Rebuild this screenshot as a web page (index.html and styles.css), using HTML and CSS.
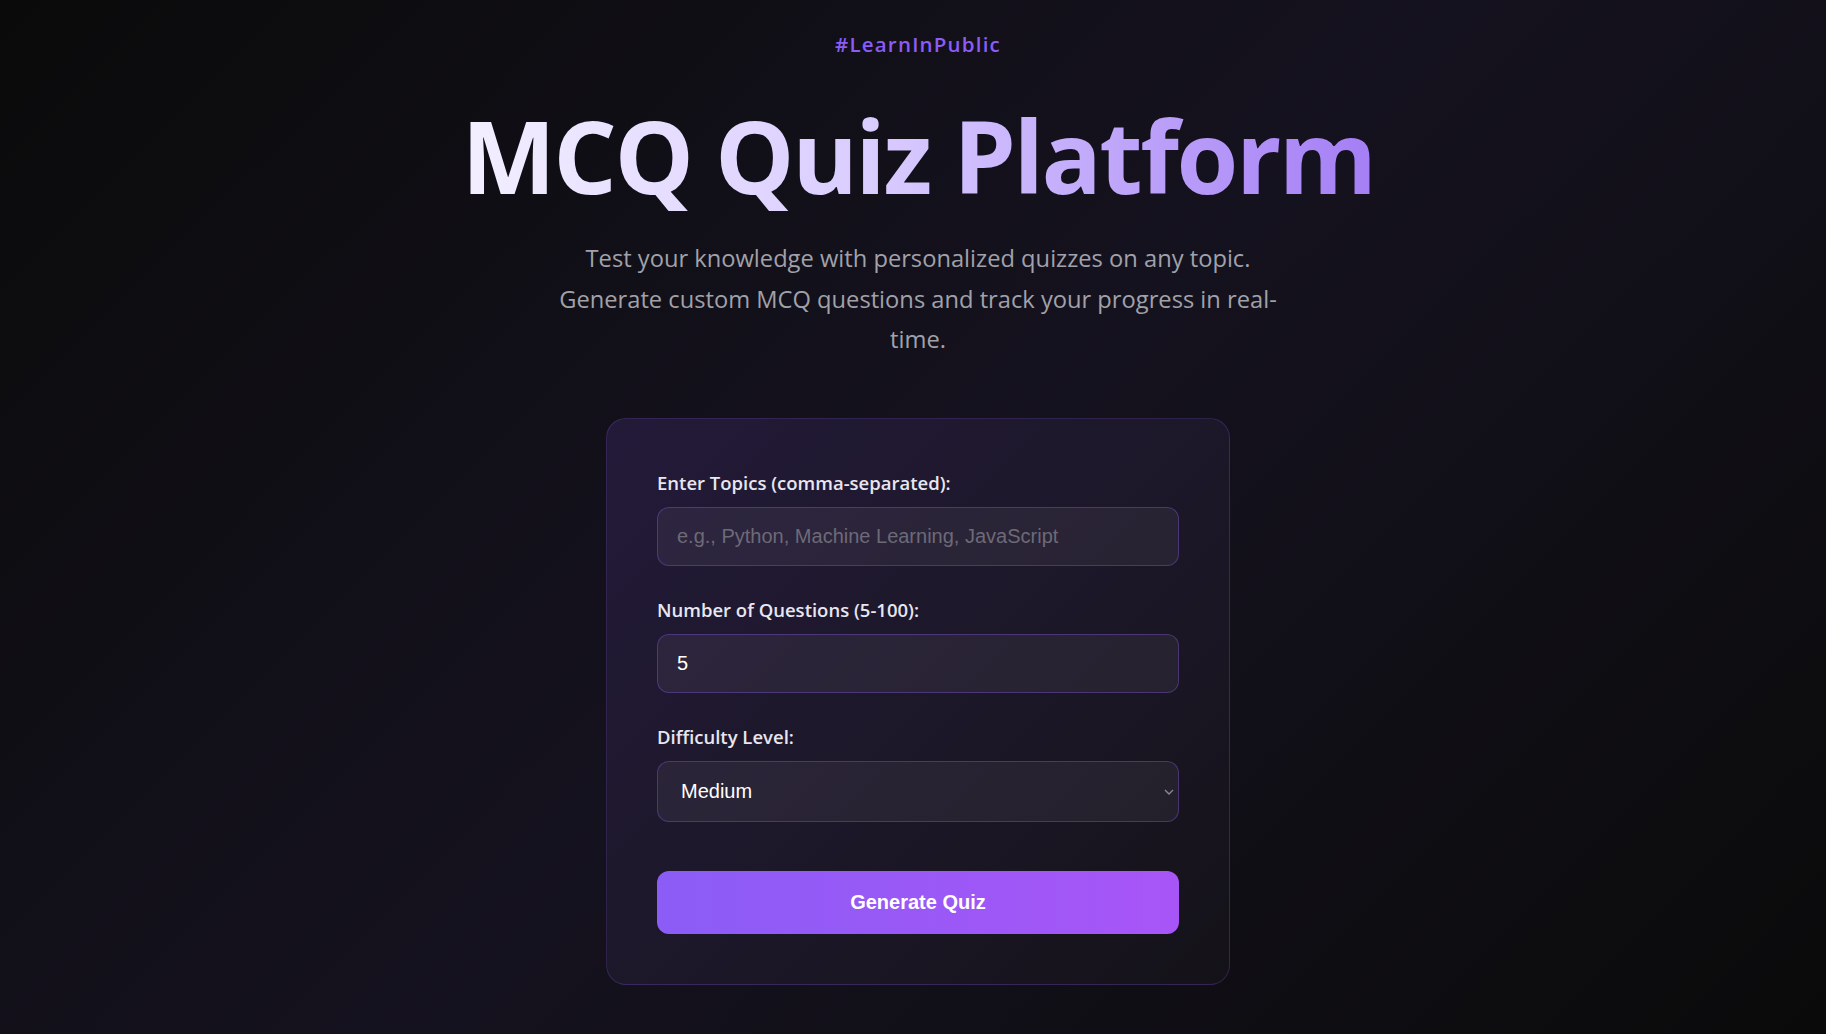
FILE: index.html
```html
<!DOCTYPE html>
<html lang="en">
<head>
<meta charset="utf-8">
<title>MCQ Quiz Platform</title>
<link rel="stylesheet" href="styles.css">
</head>
<body>
<main class="page">
  <header class="hero">
    <div class="tag">#LearnInPublic</div>
    <h1 class="title">MCQ Quiz Platform</h1>
    <p class="subtitle">Test your knowledge with personalized quizzes on any topic. Generate custom MCQ questions and track your progress in real-time.</p>
  </header>
  <form class="card">
    <div class="group">
      <label class="label" for="topics">Enter Topics (comma-separated):</label>
      <input class="field" id="topics" type="text" placeholder="e.g., Python, Machine Learning, JavaScript">
    </div>
    <div class="group">
      <label class="label" for="count">Number of Questions (5-100):</label>
      <input class="field" id="count" type="text" value="5">
    </div>
    <div class="group">
      <label class="label" for="level">Difficulty Level:</label>
      <div class="select-wrap">
        <select class="field select" id="level">
          <option>Easy</option>
          <option selected>Medium</option>
          <option>Hard</option>
        </select>
        <svg class="chevron" width="10" height="6" viewBox="0 0 10 6"><path d="M1 1l4 4 4-4" fill="none" stroke="#8a8694" stroke-width="1.4"/></svg>
      </div>
    </div>
    <button class="btn" type="button">Generate Quiz</button>
  </form>
</main>
</body>
</html>
```
FILE: styles.css
```css
* { box-sizing: border-box; }
html, body { margin: 0; padding: 0; }
body {
  min-height: 1034px;
  background: linear-gradient(135deg, #0a0a0a 0%, #15121f 50%, #0a0a0a 100%);
  font-family: "Open Sans", "Noto Sans", sans-serif;
  color: #e8e6f0;
}
.page {
  display: flex;
  flex-direction: column;
  align-items: center;
  padding-top: 29px;
  padding-left: 10px;
}
.hero {
  display: flex;
  flex-direction: column;
  align-items: center;
  text-align: center;
}
.tag {
  font-size: 20.5px;
  line-height: 30px;
  font-weight: 600;
  letter-spacing: 1.2px;
  color: #8b5cf6;
}
.title {
  margin: 36px 0 0;
  font-size: 100px;
  line-height: 120px;
  font-weight: 700;
  letter-spacing: -2.5px;
  background: linear-gradient(90deg, #f3efff 0%, #d9ccff 45%, #a47ef5 100%);
  -webkit-background-clip: text;
  background-clip: text;
  color: transparent;
}
.subtitle {
  margin: 23px 0 0;
  max-width: 735px;
  font-size: 23.7px;
  line-height: 40.5px;
  color: #a1a1aa;
}
.card {
  margin-top: 58px;
  width: 624px;
  padding: 50px;
  border: 1px solid rgba(139, 92, 246, 0.22);
  border-radius: 20px;
  background: linear-gradient(135deg, #231a39 0%, #1c1728 55%, #141218 100%);
  display: flex;
  flex-direction: column;
}
.group {
  display: flex;
  flex-direction: column;
  margin-bottom: 30px;
}
.label {
  font-size: 18.5px;
  line-height: 26px;
  font-weight: 600;
  color: #e8e6f0;
  padding-top: 1px;
  margin-bottom: 11px;
}
.field {
  width: 100%;
  font-family: "Liberation Sans", Arial, sans-serif;
  font-size: 20px;
  line-height: 23px;
  padding: 17px 19px;
  color: #ffffff;
  background: rgba(255, 255, 255, 0.055);
  border: 1px solid rgba(139, 92, 246, 0.35);
  border-radius: 12px;
  outline: none;
}
.field::placeholder { color: #6d6a78; }
.select-wrap { position: relative; }
.select {
  -webkit-appearance: none;
  appearance: none;
  padding: 18px 30px 18px 23px;
  height: 61px;
}
.select option { background: #1d1828; color: #fff; }
.chevron {
  position: absolute;
  right: 5px;
  top: 28px;
}
.btn {
  margin-top: 19px;
  height: 63px;
  border: none;
  border-radius: 12px;
  background: linear-gradient(90deg, #8b5cf6 0%, #a855f7 100%);
  color: #ffffff;
  font-family: "Liberation Sans", Arial, sans-serif;
  font-size: 20px;
  font-weight: 700;
  cursor: pointer;
}
```
